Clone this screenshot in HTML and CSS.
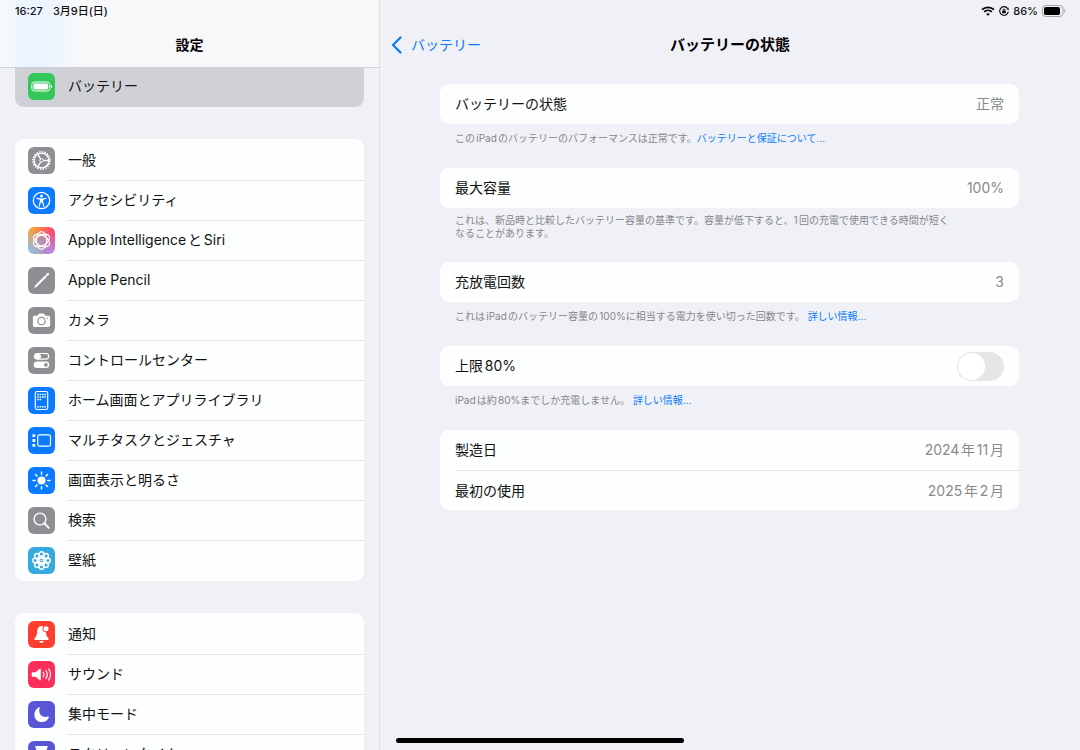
FILE: index.html
```html
<!DOCTYPE html>
<html lang="ja">
  <head>
    <meta charset="UTF-8" />
    <meta name="viewport" content="width=device-width, initial-scale=1.0" />
    <title>設定 - バッテリーの状態</title>
    <link rel="stylesheet" href="styles.css">
  </head>

  <body>
    <!-- Sidebar -->
    <aside class="sidebar">
      <header class="sidebar-header">
        <div class="status-bar">
          <span>16:27</span>
          <span>3月9日(日)</span>
        </div>
        <h1 class="title">設定</h1>
      </header>

      <nav class="menu">
        <ul class="group">
          <li>
            <a href="#battery" class="row selected">
              <svg class="icon green" viewBox="0 0 27 27">
                <rect x="3.8" y="9" width="18" height="9" rx="2.6" fill="none" stroke="#fff" stroke-width="1" />
                <rect x="5.4" y="10.6" width="14.8" height="5.8" rx="1.4" fill="#fff" />
                <path d="M23 11.8v3.4c1.5-.5 1.5-2.9 0-3.4z" fill="#fff" />
              </svg>
              <span class="label">バッテリー</span>
            </a>
          </li>
        </ul>

        <ul class="group">
          <li>
            <a href="#general" class="row">
              <svg class="icon gray" viewBox="0 0 27 27" fill="none" stroke="#fff">
                <circle cx="13.5" cy="13.5" r="8.7" stroke-width="1.5" stroke-dasharray="1.5 1.233" />
                <circle cx="13.5" cy="13.5" r="7.4" stroke-width="1.4" />
                <circle cx="13.5" cy="13.5" r="1.7" stroke-width="1" />
                <path d="M15.2 13.5h5.7M12.6 12L9.8 7.1M12.6 15l-2.8 4.9" stroke-width="1.3" />
              </svg>
              <span class="label">一般</span>
            </a>
          </li>
          <li>
            <a href="#accessibility" class="row">
              <svg class="icon blue" viewBox="0 0 27 27">
                <circle cx="13.5" cy="13.5" r="8.2" fill="none" stroke="#fff" stroke-width="1.3" />
                <circle cx="13.5" cy="9" r="1.5" fill="#fff" />
                <path d="M9 11.3l3.4.8v2.6l-1.2 4.4M18 11.3l-3.4.8v2.6l1.2 4.4" fill="none" stroke="#fff" stroke-width="1.2" stroke-linecap="round" stroke-linejoin="round" />
                <path d="M12 11.6h3v3.9h-3z" fill="#fff" />
              </svg>
              <span class="label">アクセシビリティ</span>
            </a>
          </li>
          <li>
            <a href="#siri" class="row">
              <svg class="icon siri" viewBox="0 0 27 27" fill="none" stroke="#fff" stroke-width="1.2">
                <ellipse cx="13.5" cy="13.5" rx="8.8" ry="5.2" transform="rotate(30 13.5 13.5)" />
                <ellipse cx="13.5" cy="13.5" rx="8.8" ry="5.2" transform="rotate(90 13.5 13.5)" />
                <ellipse cx="13.5" cy="13.5" rx="8.8" ry="5.2" transform="rotate(150 13.5 13.5)" />
              </svg>
              <span class="label">Apple IntelligenceとSiri</span>
            </a>
          </li>
          <li>
            <a href="#pencil" class="row">
              <svg class="icon gray" viewBox="0 0 27 27" stroke="#fff" fill="none">
                <path d="M8.3 18.7L18 9" stroke-width="2.2" />
                <path d="M19 8l1-1" stroke-width="2.4" stroke-linecap="round" />
                <path d="M7.4 17.8l1.8 1.8-3.1 1.3z" fill="#fff" stroke="none" />
              </svg>
              <span class="label">Apple Pencil</span>
            </a>
          </li>
          <li>
            <a href="#camera" class="row">
              <svg class="icon gray" viewBox="0 0 27 27">
                <path d="M6.5 8.7h3l1.2-1.7c.2-.3.5-.5.9-.5h3.8c.4 0 .7.2.9.5l1.2 1.7h3c.9 0 1.6.7 1.6 1.6v8c0 .9-.7 1.6-1.6 1.6h-14c-.9 0-1.6-.7-1.6-1.6v-8c0-.9.7-1.6 1.6-1.6z" fill="#fff" />
                <circle cx="13.5" cy="14" r="3.7" fill="none" stroke="#8e8e93" stroke-width="1.2" />
                <circle cx="19.3" cy="11.2" r=".8" fill="#8e8e93" />
              </svg>
              <span class="label">カメラ</span>
            </a>
          </li>
          <li>
            <a href="#control-center" class="row">
              <svg class="icon gray" viewBox="0 0 27 27">
                <rect x="6.3" y="6.5" width="14.4" height="5.6" rx="2.8" fill="none" stroke="#fff" stroke-width="1.2" />
                <rect x="6.5" y="6.7" width="6.5" height="5.2" rx="2.6" fill="#fff" />
                <rect x="5.7" y="14.5" width="15.6" height="6.6" rx="3.3" fill="#fff" />
                <circle cx="17.9" cy="17.8" r="1.9" fill="#8e8e93" />
              </svg>
              <span class="label">コントロールセンター</span>
            </a>
          </li>
          <li>
            <a href="#home-screen" class="row">
              <svg class="icon blue" viewBox="0 0 27 27" fill="none" stroke="#fff">
                <rect x="7.3" y="4.5" width="12.4" height="18" rx="1.8" stroke-width="1.2" />
                <path d="M9.3 7.5h8.7M9.3 10h8.7M9.3 12.5h4" stroke-width="1.5" stroke-dasharray="1.5 .85" />
                <path d="M9.3 19.7h8.7" stroke-width="1.4" stroke-dasharray="1.5 .85" />
              </svg>
              <span class="label">ホーム画面とアプリライブラリ</span>
            </a>
          </li>
          <li>
            <a href="#multitasking" class="row">
              <svg class="icon blue" viewBox="0 0 27 27">
                <rect x="9.8" y="7.8" width="12.7" height="11.4" rx="1.8" fill="none" stroke="#fff" stroke-width="1.2" />
                <path d="M4.5 7.2h2.8V10H4.5zM4.5 12.1h2.8v2.8H4.5zM4.5 17h2.8v2.8H4.5z" fill="#fff" />
              </svg>
              <span class="label">マルチタスクとジェスチャ</span>
            </a>
          </li>
          <li>
            <a href="#display" class="row">
              <svg class="icon blue" viewBox="0 0 27 27">
                <circle cx="13.5" cy="13.5" r="4" fill="#fff" />
                <path d="M13.5 5v2.2M13.5 19.8V22M5 13.5h2.2M19.8 13.5H22M7.5 7.5L9 9M18 18l1.5 1.5M19.5 7.5L18 9M9 18l-1.5 1.5" stroke="#fff" stroke-width="1.5" stroke-linecap="round" />
              </svg>
              <span class="label">画面表示と明るさ</span>
            </a>
          </li>
          <li>
            <a href="#search" class="row">
              <svg class="icon gray" viewBox="0 0 27 27" fill="none" stroke="#fff" stroke-linecap="round">
                <circle cx="12" cy="12" r="5.9" stroke-width="1.4" />
                <path d="M16.4 16.4l4.4 4.4" stroke-width="1.9" />
              </svg>
              <span class="label">検索</span>
            </a>
          </li>
          <li>
            <a href="#wallpaper" class="row">
              <svg class="icon cyan" viewBox="0 0 27 27" fill="none" stroke="#fff" stroke-width="1.5">
                <circle cx="13.5" cy="7" r="2.3" />
                <circle cx="18.1" cy="8.9" r="2.3" />
                <circle cx="20" cy="13.5" r="2.3" />
                <circle cx="18.1" cy="18.1" r="2.3" />
                <circle cx="13.5" cy="20" r="2.3" />
                <circle cx="8.9" cy="18.1" r="2.3" />
                <circle cx="7" cy="13.5" r="2.3" />
                <circle cx="8.9" cy="8.9" r="2.3" />
                <circle cx="13.5" cy="13.5" r="3" stroke-width="2.2" />
                <circle cx="13.5" cy="13.5" r="1" fill="#fff" stroke="none" />
              </svg>
              <span class="label">壁紙</span>
            </a>
          </li>
        </ul>

        <ul class="group">
          <li>
            <a href="#notifications" class="row">
              <svg class="icon red" viewBox="0 0 27 27">
                <path d="M13.5 5c-3 .3-4.3 2.7-4.4 5.6-.1 3.6-.8 4.9-2.3 6.3-.9.9-.6 2 .6 2h12.2c1.2 0 1.5-1.1.6-2-1.500-1.400-2.200-2.700-2.300-6.300C17.800 7.700 16.500 5.300 13.500 5z" fill="#fff" />
                <path d="M11.2 19.9h4.6c-.3 1.3-1.2 2-2.3 2s-2-.7-2.3-2z" fill="#fff" />
                <circle cx="18" cy="7.8" r="3.1" fill="#fff" stroke="#fc3d30" stroke-width="1" />
              </svg>
              <span class="label">通知</span>
            </a>
          </li>
          <li>
            <a href="#sound" class="row">
              <svg class="icon pink" viewBox="0 0 27 27" fill="none" stroke="#fff" stroke-width="1.2" stroke-linecap="round">
                <path d="M4.5 11.3h3l4.3-3.6c.5-.4 1-.1 1 .5v10.6c0 .6-.5.9-1 .5l-4.3-3.6h-3c-.5 0-.8-.3-.8-.8v-2.8c0-.5.3-.8.8-.8z" fill="#fff" stroke="none" />
                <path d="M15.2 11.2c.9 1.4.9 3.2 0 4.6M17.9 9.5c1.7 2.5 1.7 5.5 0 8M20.6 7.9c2.4 3.5 2.4 7.7 0 11.2" />
              </svg>
              <span class="label">サウンド</span>
            </a>
          </li>
          <li>
            <a href="#focus" class="row">
              <svg class="icon indigo" viewBox="0 0 27 27">
                <path d="M11 6.2c.4-.2.9.2.7.7-2 5.6 2.2 10.4 8.4 8.7.5-.1.9.3.7.8-1.2 2.8-3.9 4.7-7 4.7-4.2 0-7.4-3.3-7.4-7.4 0-3.4 1.8-6.3 4.6-7.5z" fill="#fff" />
              </svg>
              <span class="label">集中モード</span>
            </a>
          </li>
          <li>
            <a href="#screen-time" class="row">
              <svg class="icon indigo" viewBox="0 0 27 27">
                <path d="M8 5h11c1 0 1 2 0 2-.2 3-1.500 4.800-3.500 6.500C17.500 15.200 18.800 17 19 20c1 0 1 2 0 2H8c-1 0-1-2 0-2 .2-3 1.500-4.800 3.500-6.500C9.500 11.800 8.200 10 8 7 7 7 7 5 8 5z" fill="#fff" />
              </svg>
              <span class="label">スクリーンタイム</span>
            </a>
          </li>
        </ul>
      </nav>
    </aside>

    <!-- Detail -->
    <main class="detail">
      <header class="detail-header">
        <div class="status-bar status-right">
          <svg width="14" height="10" viewBox="0 0 14 10" fill="none" stroke="#000" stroke-width="1.7">
            <path d="M1 3.7c3.3-3.2 8.7-3.2 12 0M3.1 5.9c2.2-2.1 5.6-2.1 7.800 0" />
            <path d="M7 9.8L5.1 7.9c1.1-1 2.7-1 3.8 0z" fill="#000" stroke="none" />
          </svg>
          <svg width="10" height="10" viewBox="0 0 10 10" fill="none" stroke="#000">
            <path d="M8.5 2.4A4.3 4.3 0 1 0 9.3 5.5" stroke-width="1.1" />
            <path d="M9.9 4L7.4 3.3l2-1.9z" fill="#000" stroke="none" />
            <rect x="3.2" y="4.6" width="3.6" height="2.7" rx=".4" fill="#000" stroke="none" />
            <path d="M4 4.8V3.9c0-1.3 2-1.3 2 0v.9" stroke-width=".8" />
          </svg>
          <span>86%</span>
          <svg width="24" height="12" viewBox="0 0 24 12">
            <rect x=".5" y=".5" width="20.5" height="11" rx="3.3" fill="none" stroke="#a3a4a8" />
            <rect x="2" y="2" width="16" height="8" rx="1.8" fill="#000" />
            <path d="M22.3 4v4c1.6-.6 1.6-3.4 0-4z" fill="#a3a4a8" />
          </svg>
        </div>
        <div class="nav-bar">
          <a href="#battery" class="back">
            <svg width="11" height="18" viewBox="0 0 11 18" fill="none" stroke="#0a7aff" stroke-width="2.2" stroke-linecap="round" stroke-linejoin="round">
              <path d="M9.5 1.5L2 9l7.5 7.5" />
            </svg>
            <span>バッテリー</span>
          </a>
          <h2 class="title title-large">バッテリーの状態</h2>
        </div>
      </header>

      <div class="content">
        <section>
          <div class="card">
            <div class="item">
              <span>バッテリーの状態</span>
              <span class="value">正常</span>
            </div>
          </div>
          <p class="note">このiPadのバッテリーのパフォーマンスは正常です。<a href="#warranty">バッテリーと保証について...</a></p>
        </section>

        <section>
          <div class="card">
            <div class="item">
              <span>最大容量</span>
              <span class="value">100%</span>
            </div>
          </div>
          <p class="note note-long">これは、新品時と比較したバッテリー容量の基準です。容量が低下すると、1回の充電で使用できる時間が短く<br />なることがあります。</p>
        </section>

        <section>
          <div class="card">
            <div class="item">
              <span>充放電回数</span>
              <span class="value">3</span>
            </div>
          </div>
          <p class="note">これはiPadのバッテリー容量の100%に相当する電力を使い切った回数です。 <a href="#cycle-info">詳しい情報...</a></p>
        </section>

        <section>
          <div class="card">
            <div class="item">
              <label for="limit">上限80%</label>
              <input type="checkbox" id="limit" class="switch" />
            </div>
          </div>
          <p class="note">iPadは約80%までしか充電しません。 <a href="#limit-info">詳しい情報...</a></p>
        </section>

        <section>
          <div class="card">
            <div class="item">
              <span>製造日</span>
              <span class="value">2024年11月</span>
            </div>
            <div class="item">
              <span>最初の使用</span>
              <span class="value">2025年2月</span>
            </div>
          </div>
        </section>
      </div>
    </main>

    <div class="home-indicator"></div>
  </body>
</html>
```
FILE: styles.css
```css
* {
  box-sizing: border-box;
}

body {
  font-family: Inter, "Noto Sans CJK JP", sans-serif;
  font-size: 14px;
  line-height: 20px;
  text-autospace: normal;
  color: #111;
  background: #f0f1f6;
  margin: 0;
  height: 100vh;
  display: flex;
  overflow: hidden;
}

a {
  color: #0a7aff;
  text-decoration: none;
}

.status-bar {
  display: flex;
  align-items: center;
  gap: 10px;
  height: 22px;
  padding: 0 15px;
  font-size: 11px;
  font-weight: 500;
  text-autospace: no-autospace;
}

.status-right {
  justify-content: flex-end;
  gap: 4px;
  padding: 0 14px;
}

.title {
  margin: 0;
  font-size: 14px;
  font-weight: bold;
  line-height: 46px;
  text-align: center;
  color: #000;
}

.title-large {
  font-size: 15px;
}

/* Sidebar */
.sidebar {
  flex: 0 0 380px;
  display: flex;
  flex-direction: column;
  border-right: 1px solid #dfe0e5;
}

.sidebar-header {
  position: relative;
  z-index: 1;
  flex-shrink: 0;
  height: 68px;
  margin-bottom: -3px;
  background: linear-gradient(90deg, #f8f9fb 0, #ebf4ff 24px, #ebf4ff 48px, #f7f8fa 76px, #f8f8f9 100%);
  border-bottom: 1px solid #cfd0d4;
}

.menu {
  flex: 1;
  min-height: 0;
  overflow: hidden;
  display: flex;
  flex-direction: column;
  gap: 32px;
  padding: 0 15px;
}

.group {
  flex-shrink: 0;
  list-style: none;
  margin: 0;
  padding: 1px 0;
  background: #fdfefe;
  border-radius: 9px;
  overflow: hidden;
}

.group:first-child {
  background: #d0d1d6;
  border-radius: 0 0 9px 9px;
}

.row {
  display: flex;
  align-items: center;
  gap: 13px;
  height: 40px;
  padding-left: 13px;
  color: #111;
}

.selected {
  background: #d0d1d6;
}

.label {
  flex: 1;
  line-height: 38px;
  border-top: 1px solid transparent;
  padding-bottom: 1px;
}

li + li .label {
  border-top-color: #e0e2e6;
}

.icon {
  width: 27px;
  height: 27px;
  border-radius: 6px;
}

.gray {
  background: #8e8e93;
}

.blue {
  background: #0a7aff;
}

.green {
  background: #34c759;
}

.cyan {
  background: #35a9e0;
}

.red {
  background: #fc3d30;
}

.pink {
  background: #fb2d5b;
}

.indigo {
  background: #5856d6;
}

.siri {
  background:
    radial-gradient(circle at 50% 50%, rgba(170, 150, 190, 0.8), transparent 45%),
    radial-gradient(circle at 0 100%, #7fc4fb, transparent 70%),
    radial-gradient(circle at 100% 100%, #b98af0, transparent 60%),
    linear-gradient(100deg, #fba52e 10%, #fb4673 80%);
}

/* Detail */
.detail {
  flex: 1;
  min-width: 0;
}

.nav-bar {
  display: grid;
  grid-template-columns: 1fr auto 1fr;
  align-items: center;
  height: 46px;
  padding: 0 11px;
}

.back {
  display: flex;
  align-items: center;
  gap: 9px;
}

.content {
  display: flex;
  flex-direction: column;
  gap: 22px;
  padding: 16px 61px 0 60px;
}

.card {
  background: #fdfefe;
  border-radius: 9px;
  padding-left: 15px;
}

.item {
  display: flex;
  align-items: center;
  justify-content: space-between;
  height: 40px;
  padding-right: 15px;
}

.item + .item {
  border-top: 1px solid #e0e2e6;
}

.value {
  color: #8a8a8e;
}

.note {
  margin: 6px 15px 0;
  font-size: 10px;
  line-height: 16px;
  color: #85868b;
}

.note-long {
  line-height: 13px;
}

.switch {
  appearance: none;
  display: flex;
  width: 47px;
  height: 29px;
  margin: 0;
  padding: 1px;
  border-radius: 15px;
  background: #e6e6e8;
  cursor: pointer;
}

.switch::before {
  content: "";
  width: 27px;
  height: 27px;
  border-radius: 50%;
  background: #fff;
}

.switch:checked {
  justify-content: flex-end;
  background: #34c759;
}

.home-indicator {
  position: fixed;
  bottom: 7px;
  left: 50%;
  width: 288px;
  height: 5px;
  margin-left: -144px;
  border-radius: 3px;
  background: #000;
}
```
